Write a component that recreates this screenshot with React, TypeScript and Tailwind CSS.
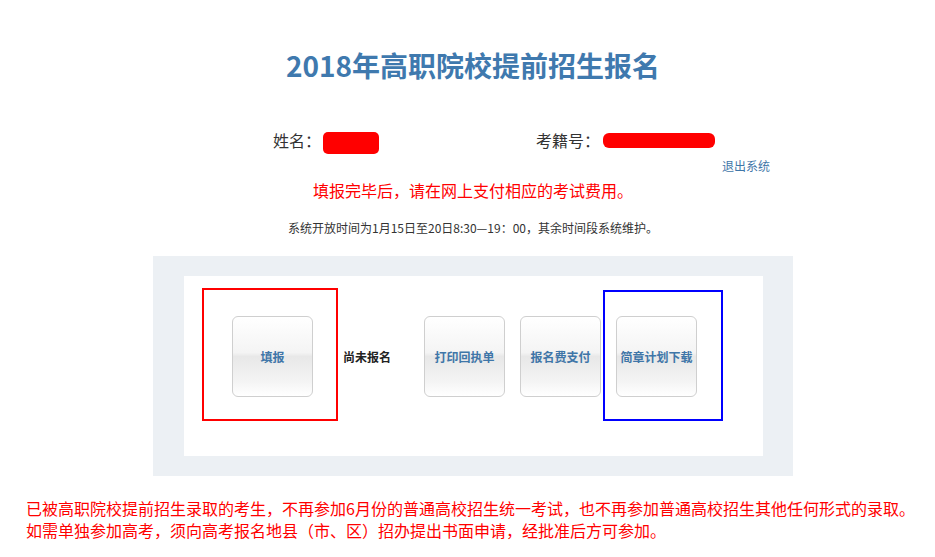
const cjk = "font-['Noto_Sans_CJK_SC',sans-serif]";

const btnClass =
  "w-[81px] h-[81px] shrink-0 rounded-[6px] border border-[#cfcfcf] bg-[linear-gradient(to_bottom,#ffffff_0%,#f4f4f4_45%,#e8e8e8_50%,#f3f3f3_80%,#ffffff_100%)] flex items-center justify-center text-[12px] font-bold text-[#3f76a8] leading-none";

const ActionButton: React.FC<{ label: string }> = ({ label }) => (
  <div className={btnClass}>{label}</div>
);

export default function App() {
  return (
    <div className={`w-full min-h-[557px] bg-white ${cjk}`}>
      <div className="w-[640px] ml-[153px]">
        <h1 className="pt-[45px] text-center text-[28px] leading-[40px] font-bold text-[#3f79ae]">
          2018年高职院校提前招生报名
        </h1>

        <div className="mt-[43px] flex items-center h-[24px] pl-[120px] text-[16px] text-[#333]">
          <div className="w-[263px] flex items-center">
            <span className="leading-[24px]">姓名：</span>
            <div className="ml-[2px] mt-[6px] w-[56px] h-[22px] bg-[#ff0000] rounded-[5px]" />
          </div>
          <div className="flex items-center">
            <span className="leading-[24px]">考籍号：</span>
            <div className="ml-[3px] w-[112px] h-[15px] bg-[#ff0000] rounded-[6px]" />
          </div>
        </div>

        <div className="mt-[6px] pr-[23px] text-right text-[12px] leading-[16px] text-[#3f76a8]">
          退出系统
        </div>

        <p className="mt-[5px] text-center text-[16px] leading-[22px] text-[#ff0000]">
          填报完毕后，请在网上支付相应的考试费用。
        </p>

        <p className="mt-[19px] text-center text-[12px] leading-[16px] text-[#333]">
          系统开放时间为1月15日至20日8:30—19：00，其余时间段系统维护。
        </p>

        <div className="mt-[20px] h-[220px] bg-[#ecf0f4] pt-[20px] pl-[31px] pr-[30px] pb-[20px]">
          <div className="h-[180px] bg-white flex items-start pl-[18px] pt-[12px]">
            <div className="w-[136px] h-[133px] shrink-0 border-2 border-[#ff0000] pl-[28px] pt-[26px]">
              <ActionButton label="填报" />
            </div>
            <div className="w-[86px] shrink-0 pl-[5px] mt-[61px] text-[12px] leading-[16px] font-bold text-[#222]">
              尚未报名
            </div>
            <div className="mt-[28px]">
              <ActionButton label="打印回执单" />
            </div>
            <div className="mt-[28px] ml-[15px]">
              <ActionButton label="报名费支付" />
            </div>
            <div className="ml-[2px] mt-[2px] w-[120px] h-[131px] shrink-0 border-2 border-[#0000ff] pl-[11px] pt-[24px]">
              <ActionButton label="简章计划下载" />
            </div>
          </div>
        </div>
      </div>

      <div className="mt-[21px] pl-[26px] text-[16px] leading-[22px] text-[#ff0000]">
        <p>已被高职院校提前招生录取的考生，不再参加6月份的普通高校招生统一考试，也不再参加普通高校招生其他任何形式的录取。</p>
        <p>如需单独参加高考，须向高考报名地县（市、区）招办提出书面申请，经批准后方可参加。</p>
      </div>
    </div>
  );
}
